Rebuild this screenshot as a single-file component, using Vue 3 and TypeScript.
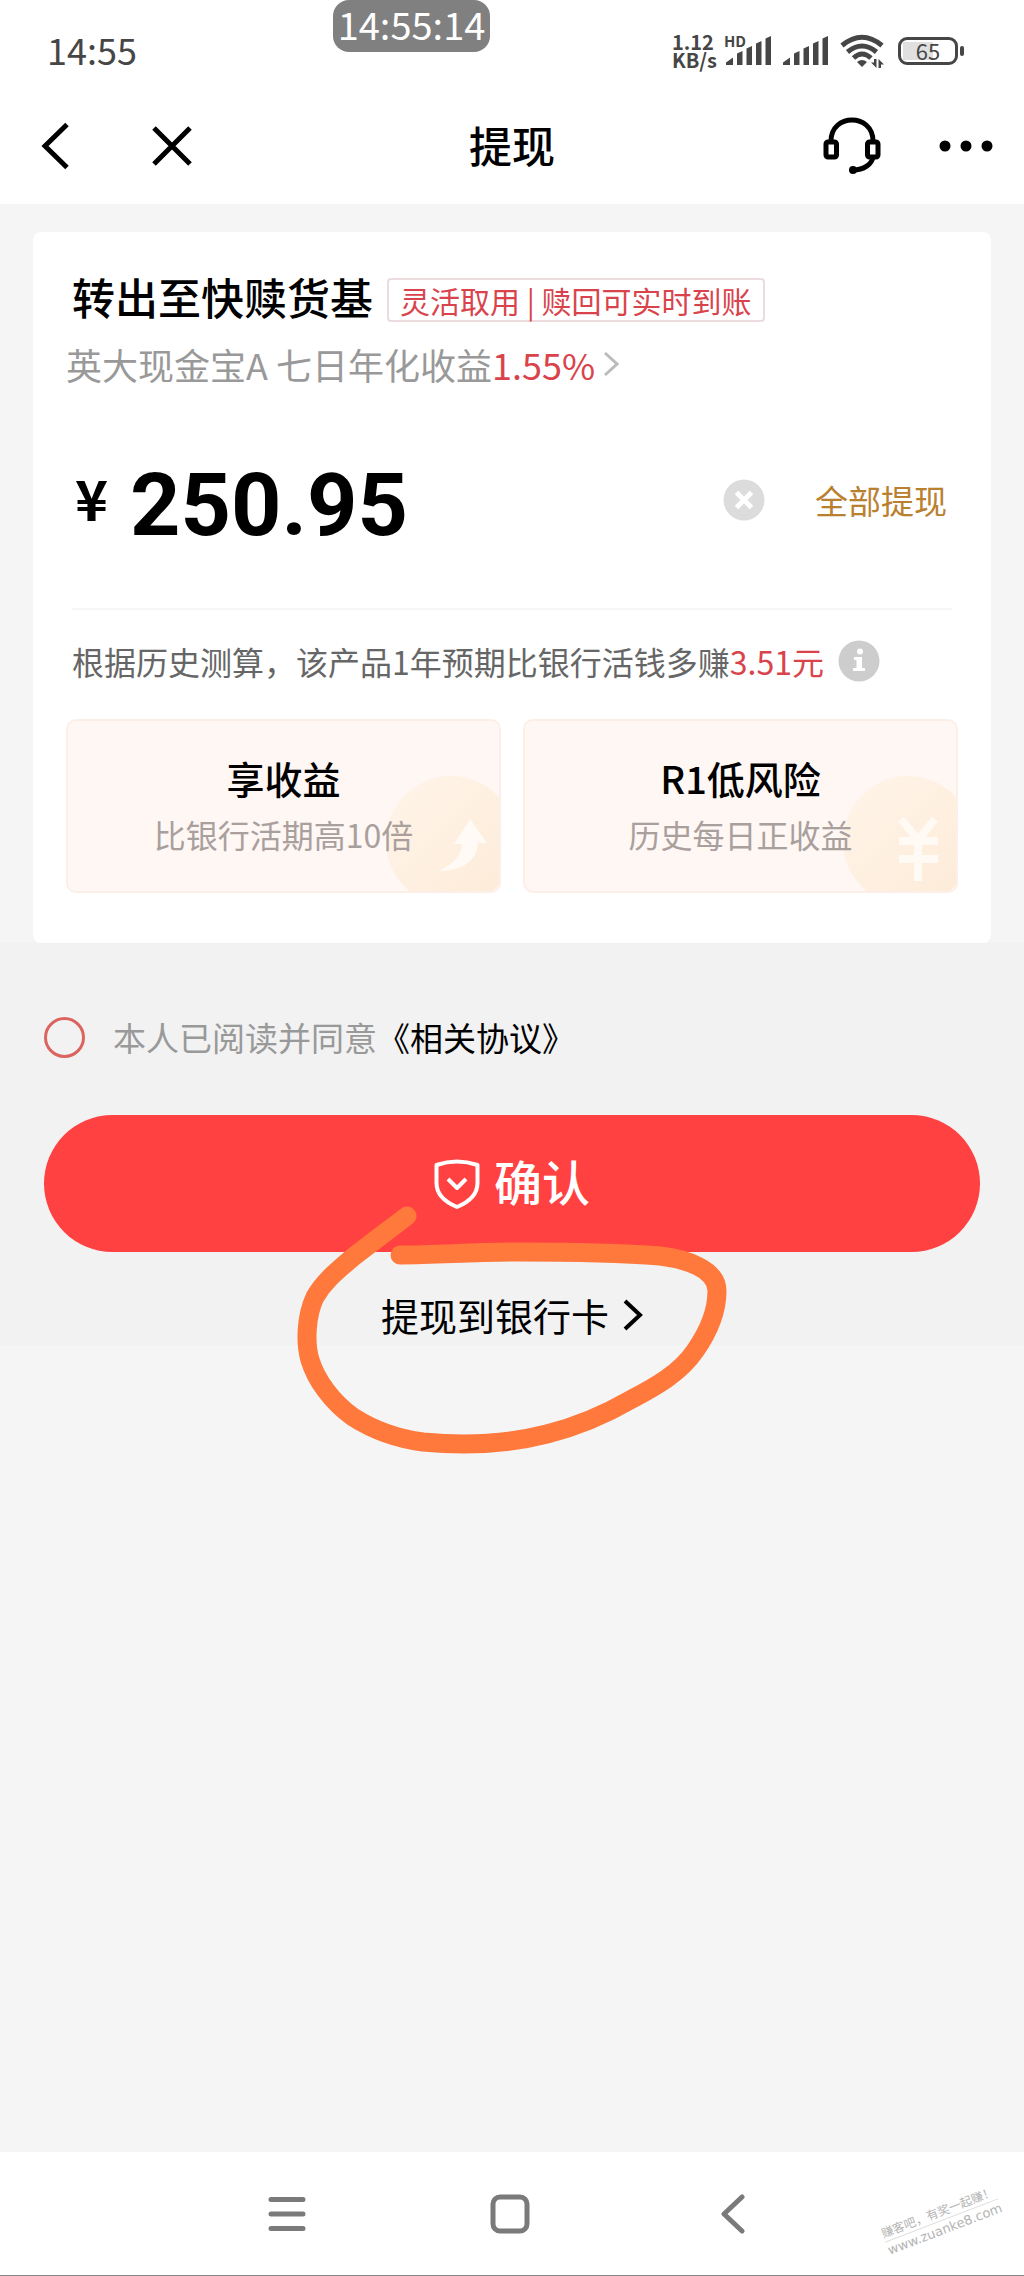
<script setup lang="ts">
import { ref } from 'vue'

interface Benefit {
  title: string
  note: string
  icon: 'arrow' | 'yuan'
}

const amount = ref('250.95')
const balance = '250.95'
const agreed = ref(false)

const benefits: Benefit[] = [
  { title: '享收益', note: '比银行活期高10倍', icon: 'arrow' },
  { title: 'R1低风险', note: '历史每日正收益', icon: 'yuan' },
]
</script>

<template>
  <div class="page">
    <header class="top">
      <div class="status">
        <span class="clock">14:55</span>
        <div class="indicators">
          <span class="speed"><span>1.12</span><span>KB/s</span></span>
          <span class="signal">
            <span class="hd">HD</span>
            <svg width="46" height="30" viewBox="0 0 46 30" fill="#464646">
              <path d="M0 29V26.500L7 21.500V29ZM11 29V17.500L16.500 15V29ZM20.500 29V12.500L26 10V29ZM30 29V7.500L35.500 5V29ZM39.500 29V2.500L45 0V29Z" />
            </svg>
          </span>
          <svg class="second" width="46" height="30" viewBox="0 0 46 30" fill="#464646">
            <path d="M0 29V26.500L7 21.500V29ZM11 29V17.500L16.500 15V29ZM20.500 29V12.500L26 10V29ZM30 29V7.500L35.500 5V29ZM39.500 29V2.500L45 0V29Z" />
          </svg>
          <svg class="wifi" width="46" height="34" viewBox="0 0 46 34" fill="none" stroke="#464646" stroke-width="5">
            <path d="M2 11.500Q22 -5 42 11.500M7.500 18Q22 6 36.500 18M13.500 24Q22 16 31 24" />
            <path d="M17 28Q22 24 27 28L22 33Z" fill="#464646" stroke="none" />
            <path d="M36.500 25V34L31 28.500H34V25ZM38.500 34V25L44 30.500H41V34Z" fill="#464646" stroke="none" />
          </svg>
          <span class="battery"><span class="cell"><span>65</span></span><i></i></span>
        </div>
        <span class="stamp">14:55:14</span>
      </div>

      <nav class="nav">
        <div class="left">
          <button type="button" aria-label="返回">
            <svg width="28" height="48" viewBox="0 0 28 48" fill="none" stroke="#000" stroke-width="5"><path d="M26 2.500L4 24L26 45.500" /></svg>
          </button>
          <button type="button" aria-label="关闭">
            <svg width="40" height="40" viewBox="0 0 40 40" fill="none" stroke="#000" stroke-width="5"><path d="M2 2L38 38M38 2L2 38" /></svg>
          </button>
        </div>
        <h1>提现</h1>
        <div class="right">
          <button type="button" aria-label="客服">
            <svg width="60" height="60" viewBox="0 0 60 60" fill="none" stroke="#000" stroke-width="5">
              <rect x="4" y="26" width="10.500" height="15" rx="2" />
              <rect x="45.500" y="26" width="10.500" height="15" rx="2" />
              <path d="M9 25C9 -3 51 -3 51 25M51 41C50 48 42 54 31 54" />
              <circle cx="31" cy="54" r="4" fill="#000" stroke="none" />
            </svg>
          </button>
          <button type="button" aria-label="更多">
            <svg width="54" height="12" viewBox="0 0 54 12"><circle cx="6" cy="6" r="5.500" /><circle cx="27" cy="6" r="5.500" /><circle cx="48" cy="6" r="5.500" /></svg>
          </button>
        </div>
      </nav>
    </header>

    <main>
      <section class="card">
        <div class="heading">
          <h2>转出至快赎货基</h2>
          <span class="tag">灵活取用 | 赎回可实时到账</span>
        </div>
        <a class="fund" href="#">
          <span>英大现金宝A 七日年化收益<em>1.55%</em></span>
          <svg width="16" height="26" viewBox="0 0 16 26" fill="none" stroke="#bbb" stroke-width="3"><path d="M2 2L14 13L2 24" /></svg>
        </a>

        <div class="amount">
          <label for="amount">¥</label>
          <input id="amount" v-model="amount" type="text" inputmode="decimal" />
          <button type="button" aria-label="清空" @click="amount = ''">
            <svg width="42" height="42" viewBox="0 0 42 42"><circle cx="21" cy="21" r="20.500" fill="#dcdcdc" /><path d="M13.500 13.500L28.500 28.500M28.500 13.500L13.500 28.500" stroke="#fff" stroke-width="5" /></svg>
          </button>
          <button type="button" class="all" @click="amount = balance">全部提现</button>
        </div>

        <p class="estimate">
          <span>根据历史测算，该产品1年预期比银行活钱多赚<em>3.51元</em></span>
          <button type="button" aria-label="说明">
            <svg width="42" height="42" viewBox="0 0 42 42"><circle cx="21" cy="21" r="20.500" fill="#cdcdcd" /><circle cx="22" cy="11.500" r="3" fill="#fff" /><path d="M16 17H24V28H27V31H15V28H18.500V20H16Z" fill="#fff" /></svg>
          </button>
        </p>

        <div class="benefits">
          <article v-for="item in benefits" :key="item.title" class="benefit">
            <svg class="coin" width="116" height="118" viewBox="0 0 116 118">
              <defs>
                <linearGradient :id="item.icon" x1="0" y1="0" x2="1" y2="1">
                  <stop offset="0" stop-color="#fff5ea" />
                  <stop offset="1" stop-color="#fdead6" />
                </linearGradient>
              </defs>
              <circle cx="66" cy="66" r="65" :fill="`url(#${item.icon})`" />
              <path v-if="item.icon === 'arrow'" d="M85 44L102 68H93C92 84 80 96 53 96C69 89 76 80 77 69H69Z" fill="#fffaf5" />
              <path v-else d="M59 44L76 65L93 44M57 66H96M57 84H96M76 62V106" fill="none" stroke="#fffaf3" stroke-width="8" />
            </svg>
            <h3>{{ item.title }}</h3>
            <p>{{ item.note }}</p>
          </article>
        </div>
      </section>

      <section class="actions">
        <div class="agree">
          <input id="agree" v-model="agreed" type="checkbox" />
          <label for="agree">本人已阅读并同意</label><a href="#">《相关协议》</a>
        </div>
        <button type="button" class="confirm">
          <svg width="46" height="50" viewBox="0 0 46 50" fill="none" stroke="#fff" stroke-width="4" stroke-linejoin="round">
            <path d="M2.500 6Q23 -1 43.500 6V24C43.500 36 35 43 23 48C11 43 2.500 36 2.500 24Z" />
            <path d="M14 20L23 29L32 20" />
          </svg>
          <span>确认</span>
        </button>
        <div class="bank">
          <a href="#">提现到银行卡
            <svg width="20" height="32" viewBox="0 0 20 32" fill="none" stroke="#000" stroke-width="4"><path d="M2 2L17 16L2 30" /></svg>
          </a>
          <svg class="scribble" width="440" height="260" viewBox="290 1200 440 260" fill="none" stroke="#ff783c" stroke-width="19" stroke-linecap="round" stroke-linejoin="round">
            <path d="M407 1216C390 1229 370 1244 352 1258C338 1270 324 1281 315 1297C306 1316 305 1343 310 1360C316 1380 332 1402 353 1417C375 1431 399 1439 423 1442C466 1446 508 1444 547 1434C575 1427 606 1414 632 1399C655 1387 680 1373 695 1351C709 1331 717 1311 717 1291C717 1269 686 1259 660 1256C620 1253 560 1252 520 1252C470 1252 440 1255 400 1255" />
          </svg>
        </div>
      </section>
    </main>

    <footer class="system">
      <button type="button" aria-label="最近任务">
        <svg width="40" height="40" viewBox="0 0 40 40" fill="none" stroke="#7a7a7a" stroke-width="5" stroke-linecap="round"><path d="M4 5.500H36M4 20H36M4 34.500H36" /></svg>
      </button>
      <button type="button" aria-label="主屏幕">
        <svg width="40" height="40" viewBox="0 0 40 40" fill="none" stroke="#7a7a7a" stroke-width="5"><rect x="3" y="3" width="34" height="34" rx="7" /></svg>
      </button>
      <button type="button" aria-label="返回上一页">
        <svg width="40" height="40" viewBox="0 0 40 40" fill="none" stroke="#7a7a7a" stroke-width="5" stroke-linecap="round" stroke-linejoin="round"><path d="M29 3L11 20L29 37" /></svg>
      </button>
      <div class="watermark"><span>赚客吧，有奖一起赚！</span><span class="site">www.zuanke8.com</span></div>
    </footer>
  </div>
</template>

<style>
body {
  margin: 0;
}
</style>

<style scoped>
.page {
  display: flex;
  flex-direction: column;
  min-height: 100vh;
  overflow: hidden;
  background: #f5f5f5;
  color: #000;
  font-family: 'Noto Sans CJK SC', sans-serif;
  font-size: 33px;
  line-height: 48px;
}
h1, h2, h3, p {
  margin: 0;
  font-weight: 500;
}
em {
  color: #d9444c;
  font-style: normal;
}
a {
  color: inherit;
  text-decoration: none;
}
button {
  display: flex;
  align-items: center;
  justify-content: center;
  padding: 0;
  border: 0;
  background: none;
  color: inherit;
  font: inherit;
}
svg {
  display: block;
  flex: none;
}
.top {
  background: #fff;
}
.status {
  position: relative;
  display: flex;
  align-items: center;
  justify-content: space-between;
  box-sizing: border-box;
  height: 88px;
  padding: 14px 60px 0 47px;
  color: #464646;
}
.clock {
  padding-bottom: 4px;
  font-size: 36px;
}
.stamp {
  position: absolute;
  top: 0;
  left: calc(50% - 179px);
  width: 157px;
  height: 52px;
  border-radius: 16px;
  background: #808080;
  color: #fff;
  font-size: 38px;
  text-align: center;
}
.indicators {
  display: flex;
  align-items: center;
}
.speed {
  display: flex;
  flex-direction: column;
  width: 54px;
  font-size: 20px;
  font-weight: 700;
  line-height: 18px;
}
.signal {
  position: relative;
}
.hd {
  position: absolute;
  top: -5px;
  left: -2px;
  font-size: 15px;
  font-weight: 700;
  line-height: 20px;
}
.second {
  margin-left: 11px;
}
.wifi {
  margin-left: 11px;
}
.battery {
  display: flex;
  align-items: center;
  margin-left: 12px;
}
.cell {
  box-sizing: border-box;
  width: 60px;
  height: 28px;
  padding: 2px;
  border: 3px solid #464646;
  border-radius: 9px;
  font-size: 22px;
  line-height: 16px;
  text-align: center;
}
.cell span {
  display: block;
  height: 18px;
  background: linear-gradient(90deg, #e0e0e0 60%, #fff 60%);
}
.battery i {
  width: 4px;
  height: 10px;
  margin-left: 2px;
  border-radius: 2px;
  background: #464646;
}
.nav {
  display: grid;
  grid-template-columns: 1fr auto 1fr;
  align-items: center;
  height: 116px;
  padding: 0 31px;
}
.nav h1 {
  padding-bottom: 4px;
  font-size: 43px;
}
.left, .right {
  display: flex;
  align-items: center;
}
.left {
  gap: 83px;
  padding-left: 10px;
}
.right {
  justify-content: flex-end;
  gap: 57px;
}
main {
  flex: 1;
}
.card {
  margin: 28px 33px 0;
  padding: 40px 33px 50px;
  border-radius: 8px;
  background: #fff;
}
.heading {
  display: flex;
  align-items: flex-start;
  gap: 14px;
  height: 48px;
  padding-left: 6px;
}
.heading h2 {
  font-size: 43px;
}
.tag {
  margin-top: 6px;
  padding: 0 11px;
  border: 2px solid #ecdcdd;
  border-radius: 4px;
  color: #d9444c;
  font-size: 30px;
  line-height: 40px;
}
.fund {
  display: flex;
  align-items: center;
  gap: 8px;
  margin-top: 20px;
  color: #999;
  font-size: 36px;
}
.amount {
  display: flex;
  align-items: center;
  height: 112px;
  margin: 56px 6px 0;
  padding-bottom: 52px;
  border-bottom: 2px solid #f6f6f6;
}
.amount label {
  box-sizing: border-box;
  width: 58px;
  padding: 0 0 6px 3px;
  font-size: 56px;
  font-weight: 700;
}
.amount input {
  flex: 1;
  min-width: 0;
  height: 104px;
  padding: 8px 0 0;
  border: 0;
  outline: 0;
  background: none;
  color: #000;
  font-family: Roboto, sans-serif;
  font-size: 88px;
  font-weight: 700;
}
.amount .all {
  margin: 0 5px 0 50px;
  color: #b9812f;
}
.estimate {
  display: flex;
  align-items: center;
  gap: 14px;
  margin-top: 27px;
  padding-left: 6px;
  color: #666;
  font-size: 32px;
  font-weight: 400;
}
.benefits {
  display: grid;
  grid-template-columns: 1fr 1fr;
  gap: 22px;
  margin-top: 34px;
}
.benefit {
  position: relative;
  overflow: hidden;
  padding: 29px 0;
  border: 2px solid #fcefe8;
  border-radius: 10px;
  background: #fff7f4;
  line-height: 56px;
  text-align: center;
}
.coin {
  position: absolute;
  right: -2px;
  bottom: -2px;
}
.benefit h3, .benefit p {
  position: relative;
}
.benefit h3 {
  font-size: 38px;
}
.benefit p {
  color: #a9a09d;
  font-size: 32px;
  font-weight: 400;
}
.actions {
  padding: 70px 44px 0;
  background: #f2f2f2;
}
.agree {
  display: flex;
  align-items: center;
  color: #999;
}
.agree input {
  width: 41px;
  height: 41px;
  margin: 0 28px 0 0;
  border: 3px solid #dc6460;
  border-radius: 50%;
  appearance: none;
}
.agree input:checked {
  background: #ff4142;
}
.agree a {
  color: #000;
}
.confirm {
  gap: 14px;
  width: 100%;
  height: 137px;
  margin-top: 54px;
  border-radius: 69px;
  background: #ff4142;
  color: #fff;
  font-size: 48px;
  font-weight: 500;
}
.confirm span {
  padding-bottom: 8px;
}
.bank {
  position: relative;
  display: flex;
  justify-content: center;
  padding-top: 33px;
  font-size: 38px;
  line-height: 60px;
}
.bank a {
  display: flex;
  align-items: center;
  gap: 14px;
}
.scribble {
  position: absolute;
  top: -52px;
  left: calc(50% - 222px);
  pointer-events: none;
}
.system {
  position: relative;
  display: flex;
  align-items: center;
  justify-content: center;
  gap: 183px;
  height: 123px;
  padding-right: 4px;
  border-bottom: 1px solid #888;
  background: #fff;
}
.watermark {
  position: absolute;
  right: 22px;
  bottom: 36px;
  display: flex;
  flex-direction: column;
  color: #b4b4b4;
  font-size: 12px;
  line-height: 18px;
  transform: rotate(-21deg);
}
.site {
  border-top: 1px solid #ddd;
  font-family: 'DejaVu Sans', sans-serif;
  font-size: 13px;
}
</style>
